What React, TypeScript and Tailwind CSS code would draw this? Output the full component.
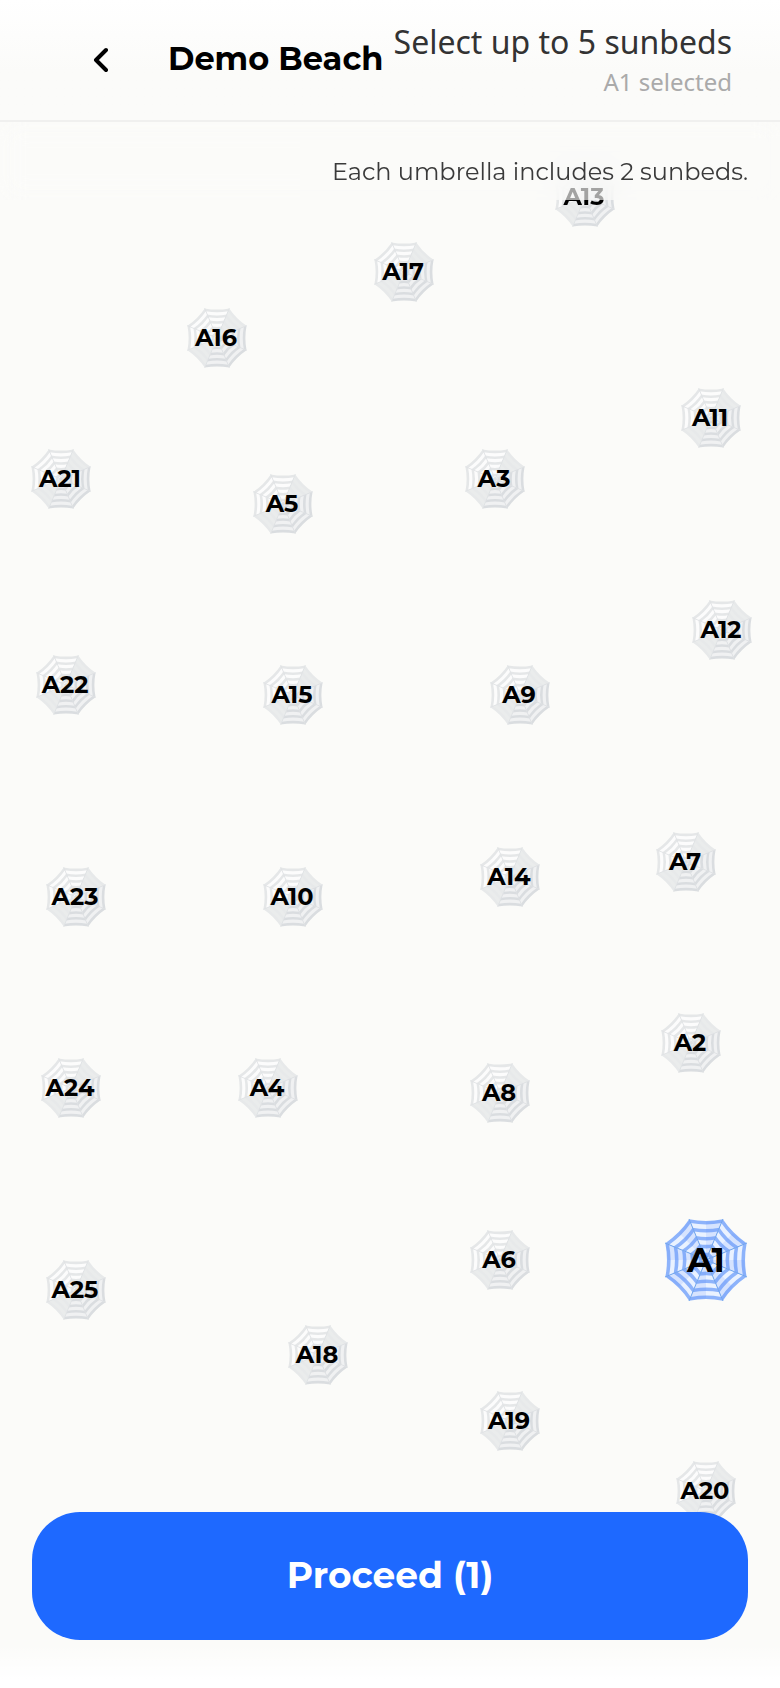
import { useState } from "react";

type Sunbed = {
  id: string;
  x: number;
  y: number;
};

// x is measured on a 780 wide plan, y is the distance from the top of the map
const PLAN_WIDTH = 780;
const MAX_SUNBEDS = 5;

const sunbeds: Sunbed[] = [
  { id: "A13", x: 585, y: 75 },
  { id: "A17", x: 404, y: 150 },
  { id: "A16", x: 217, y: 216 },
  { id: "A11", x: 711, y: 296 },
  { id: "A21", x: 61, y: 357 },
  { id: "A5", x: 283, y: 382 },
  { id: "A3", x: 495, y: 357 },
  { id: "A12", x: 722, y: 508 },
  { id: "A22", x: 66, y: 563 },
  { id: "A15", x: 293, y: 573 },
  { id: "A9", x: 520, y: 573 },
  { id: "A7", x: 686, y: 740 },
  { id: "A14", x: 510, y: 755 },
  { id: "A23", x: 76, y: 775 },
  { id: "A10", x: 293, y: 775 },
  { id: "A2", x: 691, y: 921 },
  { id: "A24", x: 71, y: 966 },
  { id: "A4", x: 268, y: 966 },
  { id: "A8", x: 500, y: 971 },
  { id: "A6", x: 500, y: 1138 },
  { id: "A1", x: 706, y: 1138 },
  { id: "A25", x: 76, y: 1168 },
  { id: "A18", x: 318, y: 1233 },
  { id: "A19", x: 510, y: 1299 },
  { id: "A20", x: 706, y: 1369 },
];

// Point on the canopy, 0deg is straight up
const point = (radius: number, deg: number) => {
  const rad = (deg * Math.PI) / 180;
  return `${(50 + radius * Math.sin(rad)).toFixed(2)} ${(50 - radius * Math.cos(rad)).toFixed(2)}`;
};

const panels = [0, 45, 90, 135, 180, 225, 270, 315];
const rings = [54, 49, 43, 38, 32, 27, 21, 16, 10, 5];

const blueTones = { dark: "#8db3fb", light: "#eaf2ff" };
const litTones = { dark: "#e5e7e8", light: "#fcfcfc" };
const shadeTones = { dark: "#dadde0", light: "#f0f1f2" };
const plainTones = { dark: "#e7e9ea", light: "#eaecec" };

const grayTones = (deg: number) => {
  if (deg === 45 || deg === 225) return plainTones;
  if (deg === 0 || deg === 270 || deg === 315) return litTones;
  return shadeTones;
};

// One eighth of the canopy, with the outer edge curved inwards
const panelPath = (radius: number, deg: number) =>
  `M50 50L${point(radius, deg - 22.5)}Q${point(radius * 0.85, deg)} ${point(radius, deg + 22.5)}Z`;

// Fold shadow on half of a panel
const foldPath = (radius: number, deg: number) =>
  `M50 50L${point(radius * 0.88, deg)}L${point(radius, deg + 22.5)}Z`;

function Umbrella({ selected }: { selected: boolean }) {
  return (
    <svg viewBox="-4 -4 108 108" className="absolute inset-0 h-full w-full" aria-hidden="true">
      {panels.map((deg) => {
        const tones = selected ? blueTones : grayTones(deg);
        return (
          <g key={deg}>
            {rings.map((radius, i) => (
              <path
                key={radius}
                d={panelPath(radius, deg)}
                fill={i % 2 === 0 ? tones.dark : tones.light}
              />
            ))}
            {selected && <path d={foldPath(53, deg)} fill="#5b8ff5" opacity="0.14" />}
          </g>
        );
      })}
      {panels.map((deg) => (
        <path
          key={deg}
          d={`M50 50L${point(54, deg + 22.5)}`}
          stroke={selected ? "#6fa4ec" : "#dcdfe1"}
          strokeWidth="1.2"
          strokeLinecap="round"
        />
      ))}
    </svg>
  );
}

function Pin({
  bed,
  selected,
  onToggle,
}: {
  bed: Sunbed;
  selected: boolean;
  onToggle: (id: string) => void;
}) {
  return (
    <button
      type="button"
      aria-pressed={selected}
      onClick={() => onToggle(bed.id)}
      className={`absolute flex items-center justify-center font-bold text-black ${
        selected ? "-mt-11 -ml-11 size-22 text-[34px]" : "-mt-8 -ml-8 size-16 pr-0.5 text-2xl"
      }`}
      style={{ left: `${(bed.x / PLAN_WIDTH) * 100}%`, top: bed.y }}
    >
      <Umbrella selected={selected} />
      <span className="relative z-10 leading-none">{bed.id}</span>
    </button>
  );
}

export default function App() {
  const [selected, setSelected] = useState<string[]>(["A1"]);

  const toggle = (id: string) => {
    setSelected((prev) => {
      if (prev.includes(id)) return prev.filter((item) => item !== id);
      if (prev.length >= MAX_SUNBEDS) return prev;
      return [...prev, id];
    });
  };

  return (
    <div className="flex min-h-screen flex-col bg-[#fbfbf9] font-['Montserrat','Inter',sans-serif]">
      <header className="flex items-start justify-between border-b-2 border-[#f0f0ef] bg-linear-to-b from-white to-[#fbfbf9] to-60% pr-12 pb-5 pl-20">
        <div className="flex items-center pt-9">
          <button type="button" aria-label="Back" className="flex h-12 w-10 items-center justify-center">
            <svg viewBox="0 0 16 26" className="h-[26px] w-4" fill="none" aria-hidden="true">
              <path
                d="M14 3L4 13L14 23"
                stroke="#000"
                strokeWidth="4"
                strokeLinecap="round"
                strokeLinejoin="round"
              />
            </svg>
          </button>
          <h1 className="ml-12 pb-0.5 text-[32px] leading-11 font-bold whitespace-nowrap text-black">
            Demo Beach
          </h1>
        </div>
        <div className="pt-5 text-right font-['Noto_Sans',sans-serif] whitespace-nowrap">
          <p className="text-[32px] leading-11 text-[#333]">Select up to {MAX_SUNBEDS} sunbeds</p>
          <p className="text-2xl leading-9 text-[#aaa]">
            {selected.length > 0 ? `${selected.join(", ")} selected` : "None selected"}
          </p>
        </div>
      </header>

      <main className="relative min-h-[1390px] flex-1">
        {sunbeds.map((bed) => (
          <Pin key={bed.id} bed={bed} selected={selected.includes(bed.id)} onToggle={toggle} />
        ))}
        {/* Frosted strip sits between the umbrellas and their labels */}
        <div className="pointer-events-none absolute inset-x-0 top-0 h-[78px] backdrop-blur-md" />
        <p className="pointer-events-none absolute top-4 right-0 z-20 bg-[#fbfbf9]/65 pt-4 pr-8 pb-2.5 pl-8 text-right text-2xl leading-9 whitespace-nowrap text-[#3a3a3a]">
          Each umbrella includes 2 sunbeds.
        </p>
      </main>

      <footer className="relative z-30 bg-linear-to-b from-transparent from-75% to-white to-95% px-8 pb-12">
        <button
          type="button"
          className="h-32 w-full rounded-[48px] bg-[#1e69ff] pb-0.5 text-4xl font-bold text-white"
        >
          Proceed ({selected.length})
        </button>
      </footer>
    </div>
  );
}
